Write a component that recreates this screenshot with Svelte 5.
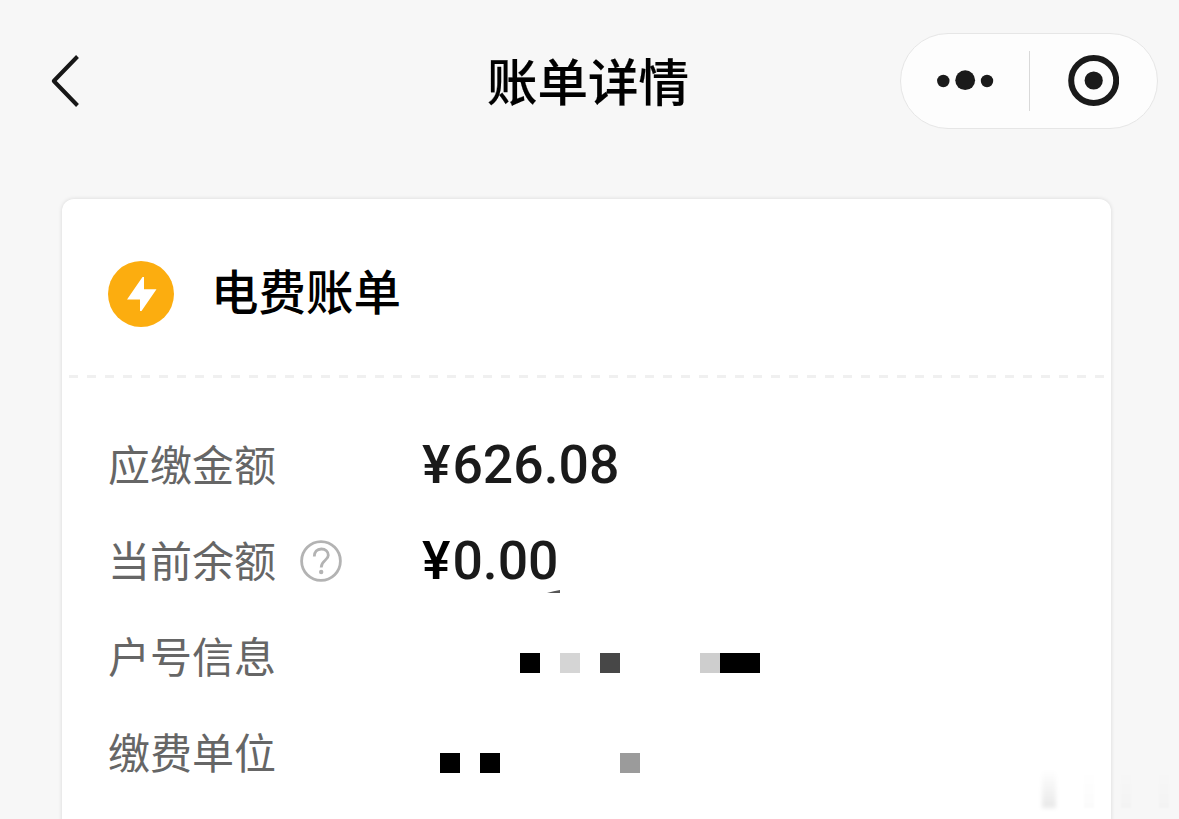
<script lang="ts">
  type Cell = { col: number; color: string };
  type Row = { label: string; amount?: string; help?: boolean; cells?: Cell[] };

  const rows: Row[] = [
    { label: '应缴金额', amount: '626.08' },
    { label: '当前余额', amount: '0.00', help: true },
    {
      label: '户号信息',
      cells: [
        { col: 6, color: '#000' },
        { col: 8, color: '#d5d5d5' },
        { col: 10, color: '#474747' },
        { col: 15, color: '#cecece' },
        { col: 16, color: '#000' },
        { col: 17, color: '#000' }
      ]
    },
    {
      label: '缴费单位',
      cells: [
        { col: 2, color: '#000' },
        { col: 4, color: '#000' },
        { col: 11, color: '#9b9b9b' }
      ]
    }
  ];
</script>

<div class="page">
  <header class="navbar">
    <button class="back" aria-label="返回">
      <svg width="32" height="56" viewBox="0 0 32 56" fill="none" stroke="#171717" stroke-width="4" stroke-linejoin="round">
        <path d="M27.5 3.5 3.8 28 27.5 52.5"></path>
      </svg>
    </button>
    <h1 class="title">账单详情</h1>
    <div class="capsule">
      <button class="capsule-btn" aria-label="更多">
        <svg width="58" height="24" viewBox="0 0 58 24" fill="#1a1a1a">
          <circle cx="7.3" cy="12" r="6.2"></circle>
          <circle cx="29.2" cy="11.2" r="9.9"></circle>
          <circle cx="51" cy="12" r="6.2"></circle>
        </svg>
      </button>
      <span class="capsule-line"></span>
      <button class="capsule-btn" aria-label="关闭">
        <svg width="52" height="52" viewBox="0 0 52 52">
          <circle cx="26.7" cy="25.5" r="22.5" fill="none" stroke="#1a1a1a" stroke-width="6"></circle>
          <circle cx="26.7" cy="25.5" r="9.1" fill="#1a1a1a"></circle>
        </svg>
      </button>
    </div>
  </header>

  <main class="card">
    <div class="card-head">
      <svg width="66" height="66" viewBox="0 0 66 66">
        <circle cx="33" cy="33" r="33" fill="#fcad0f"></circle>
        <path d="M34.5 16 19 38.5H32V50H33.500L48.500 28.300H36V16Z" fill="#fff"></path>
      </svg>
      <h2 class="card-title">电费账单</h2>
    </div>
    <div class="divider"></div>

    <div class="rows">
      {#each rows as row}
        <div class="row">
          <div class="label">
            <span>{row.label}</span>
            {#if row.help}
              <svg class="help" width="42" height="42" viewBox="0 0 42 42" fill="none" stroke="#b3b3b3" stroke-width="2.8">
                <circle cx="21" cy="21" r="19.4"></circle>
                <path d="M14.3 16.5C14.3 12 17 9 21.3 9C25.5 9 28.3 11.800 28.3 15.3C28.3 20.5 21.2 20.300 21.2 27.500"></path>
                <circle cx="21.2" cy="32" r="2.2" fill="#b3b3b3" stroke="none"></circle>
              </svg>
            {/if}
          </div>
          {#if row.amount}
            <div class="amount">
              <span class="yen" class:dark={row.help}>¥</span>{row.amount}
              {#if row.help}
                <svg class="tick" width="13" height="4" viewBox="0 0 13 4">
                  <path d="M0 3Q7 1 13 0V3Z" fill="#555"></path>
                </svg>
              {/if}
            </div>
          {:else if row.cells}
            <div class="mosaic" class:low={row.label === '缴费单位'}>
              {#each row.cells as cell}
                <i style="grid-column: {cell.col}; background: {cell.color}"></i>
              {/each}
            </div>
          {/if}
        </div>
      {/each}
    </div>
  </main>

  <div class="smudge">
    <i></i>
    <i></i>
    <i></i>
    <i></i>
  </div>
</div>

<style>
  :global(body) {
    background: #f7f7f7;
    overflow: hidden;
  }

  .page {
    position: relative;
    height: 819px;
    overflow: hidden;
    box-sizing: border-box;
    background: #f7f7f7;
    font-family: 'Noto Sans CJK SC', sans-serif;
  }

  button {
    display: flex;
    align-items: center;
    justify-content: center;
    padding: 0;
    border: 0;
    background: none;
  }

  svg {
    display: block;
    flex-shrink: 0;
  }

  .navbar {
    display: grid;
    grid-template-columns: 1fr auto 1fr;
    align-items: center;
    height: 162px;
    padding: 0 21px 0 50px;
  }

  .back {
    justify-self: start;
  }

  .title {
    margin: 0 0 5px 28px;
    transform: translateX(-30px);
    font-size: 50.5px;
    line-height: 72px;
    font-weight: 500;
    color: #000;
    -webkit-text-stroke: 0.2px #000;
  }

  .capsule {
    justify-self: end;
    display: flex;
    align-items: center;
    width: 258px;
    height: 96px;
    box-sizing: border-box;
    border: 1px solid #e6e6e6;
    border-radius: 48px;
    background: #fdfdfd;
  }

  .capsule-btn {
    flex: 1;
  }

  .capsule-line {
    width: 1px;
    height: 60px;
    background: #d9d9d9;
  }

  .card {
    height: 660px;
    margin: 37px 68px 0 62px;
    border-radius: 12px;
    background: #fff;
    box-shadow: 0 0 4px rgba(0, 0, 0, 0.13);
  }

  .card-head {
    display: flex;
    align-items: center;
    gap: 37px;
    height: 176px;
    padding: 14px 46px 0;
    box-sizing: border-box;
  }

  .card-title {
    margin: 0 0 8px;
    font-size: 47.5px;
    line-height: 68px;
    font-weight: 500;
    color: #000;
  }

  .divider {
    height: 3px;
    margin: 0 7px;
    background: repeating-linear-gradient(90deg, #f0f0f0 0 9px, transparent 9px 18px);
  }

  .rows {
    padding: 39px 46px 0;
  }

  .row {
    display: grid;
    grid-template-columns: 312px 1fr;
    align-items: center;
    height: 96px;
  }

  .label {
    display: flex;
    align-items: center;
    gap: 24px;
    font-size: 42px;
    line-height: 60px;
    color: #666;
  }

  .label span {
    margin-bottom: 4px;
  }

  .amount {
    position: relative;
    width: max-content;
    padding-left: 2px;
    font-family: Roboto, sans-serif;
    font-size: 53.5px;
    line-height: 64px;
    font-weight: 500;
    color: #1a1a1a;
  }

  .yen {
    margin-right: 2px;
  }

  .dark {
    color: #000;
  }

  .tick {
    position: absolute;
    left: 127px;
    bottom: -1px;
  }

  .mosaic {
    display: grid;
    grid-template-columns: repeat(17, 20px);
    grid-template-rows: 20px;
    padding-top: 12px;
  }

  .mosaic.low {
    padding-top: 20px;
  }

  .smudge {
    position: absolute;
    right: 10px;
    bottom: 11px;
    display: flex;
    justify-content: space-between;
    width: 130px;
    height: 38px;
  }

  .smudge i {
    width: 10px;
    background: linear-gradient(rgba(0, 0, 0, 0), rgba(0, 0, 0, 0.015));
    filter: blur(1px);
  }

  .smudge i:first-child {
    width: 14px;
    margin-left: 3px;
    background: linear-gradient(rgba(0, 0, 0, 0), rgba(0, 0, 0, 0.09));
    filter: blur(2px);
  }
</style>
